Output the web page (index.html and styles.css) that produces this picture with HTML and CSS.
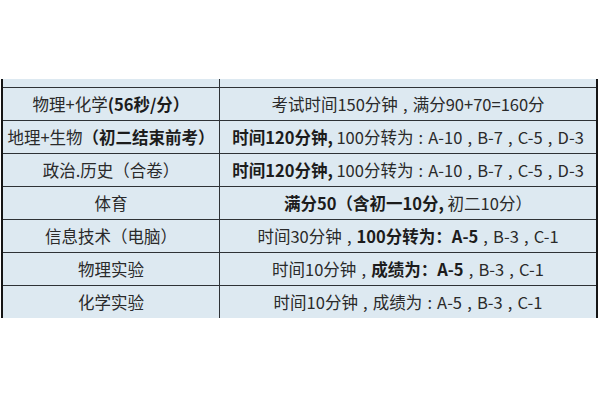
FILE: index.html
```html
<!DOCTYPE html>
<html lang="zh">
<head>
<meta charset="utf-8">
<link rel="stylesheet" href="styles.css">
</head>
<body>
<div class="page">
  <div class="sheet">
    <div class="strip"><div class="c1"></div><div class="c2"></div></div>
    <div class="row"><div class="c1">物理+化学<b>(56秒/分）</b></div><div class="c2">考试时间150分钟<span class="p">,</span>满分90+70=160分</div></div>
    <div class="row"><div class="c1">地理+生物<b>（初二结束前考）</b></div><div class="c2"><b>时间120分钟,</b>&nbsp;100分转为<span class="p">:</span>A-10<span class="p">,</span>B-7<span class="p">,</span>C-5<span class="p">,</span>D-3</div></div>
    <div class="row"><div class="c1">政治.历史（合卷）</div><div class="c2"><b>时间120分钟,</b>&nbsp;100分转为<span class="p">:</span>A-10<span class="p">,</span>B-7<span class="p">,</span>C-5<span class="p">,</span>D-3</div></div>
    <div class="row"><div class="c1">体育</div><div class="c2"><b>满分50（含初一10分,</b>&nbsp;初二10分）</div></div>
    <div class="row"><div class="c1">信息技术（电脑）</div><div class="c2">时间30分钟<span class="p">,</span><b>100分转为：A-5</b><span class="p">,</span>B-3<span class="p">,</span>C-1</div></div>
    <div class="row"><div class="c1">物理实验</div><div class="c2">时间10分钟<span class="p">,</span><b>成绩为：A-5</b><span class="p">,</span>B-3<span class="p">,</span>C-1</div></div>
    <div class="row"><div class="c1">化学实验</div><div class="c2">时间10分钟<span class="p">,</span>成绩为<span class="p">:</span>A-5<span class="p">,</span>B-3<span class="p">,</span>C-1</div></div>
  </div>
</div>
</body>
</html>
```
FILE: styles.css
```css
html, body {
  margin: 0;
  padding: 0;
  background: #ffffff;
}
.page {
  padding-top: 79px;
  padding-left: 1px;
  font-family: "Noto Sans CJK SC", "Noto Sans", sans-serif;
  color: #2a2a2a;
}
.sheet {
  width: 593px;
  border-left: 2px solid #151515;
  border-right: 2px solid #151515;
  background: #dde9f1;
}
.strip, .row {
  display: grid;
  grid-template-columns: 217px 1fr;
}
.strip {
  height: 8px;
}
.row {
  height: 32px;
  border-top: 1px solid #2e3236;
}
.c1 {
  border-right: 1px solid #2e3236;
}
.c1, .c2 {
  display: flex;
  align-items: center;
  justify-content: center;
  font-size: 16.5px;
  white-space: nowrap;
}
.p {
  display: inline-block;
  width: 0.9em;
  text-align: center;
}
b {
  font-weight: 700;
  color: #1c1c1c;
}
```
